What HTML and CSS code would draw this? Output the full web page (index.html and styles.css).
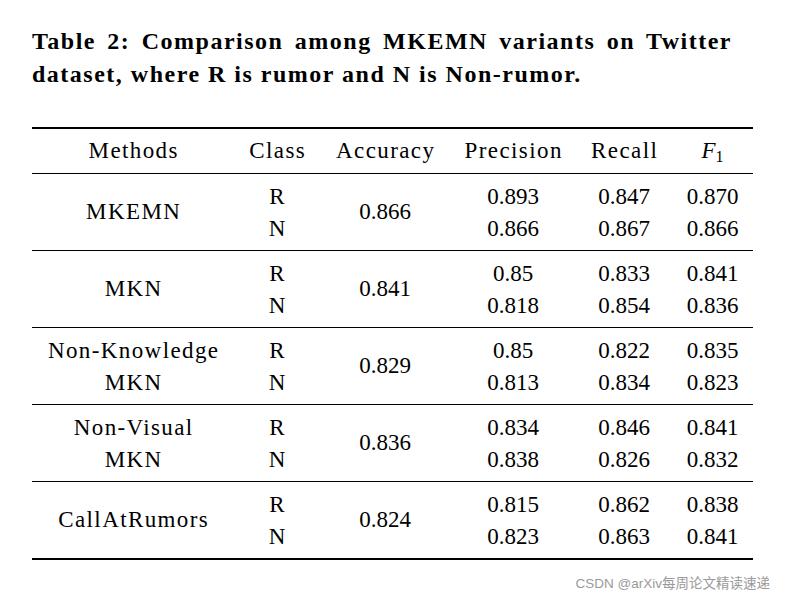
FILE: index.html
```html
<!DOCTYPE html>
<html>
<head>
<meta charset="utf-8">
<link rel="stylesheet" href="styles.css">
</head>
<body>
<div class="page">
  <div class="caption">Table 2: Comparison among MKEMN variants on Twitter dataset, where R is rumor and N is Non-rumor.</div>
  <table class="results">
    <colgroup>
      <col class="c-method"><col class="c-class"><col class="c-acc"><col class="c-prec"><col class="c-rec"><col class="c-f1">
    </colgroup>
    <thead>
      <tr><th class="word">Methods</th><th class="word">Class</th><th class="word">Accuracy</th><th class="word">Precision</th><th class="word">Recall</th><th><i>F</i><sub>1</sub></th></tr>
    </thead>
    <tbody>
      <tr class="r1"><td rowspan="2" class="word">MKEMN</td><td>R</td><td rowspan="2">0.866</td><td>0.893</td><td>0.847</td><td>0.870</td></tr>
      <tr class="r2"><td>N</td><td>0.866</td><td>0.867</td><td>0.866</td></tr>
    </tbody>
    <tbody>
      <tr class="r1"><td rowspan="2" class="word">MKN</td><td>R</td><td rowspan="2">0.841</td><td>0.85</td><td>0.833</td><td>0.841</td></tr>
      <tr class="r2"><td>N</td><td>0.818</td><td>0.854</td><td>0.836</td></tr>
    </tbody>
    <tbody>
      <tr class="r1"><td class="word">Non-Knowledge</td><td>R</td><td rowspan="2">0.829</td><td>0.85</td><td>0.822</td><td>0.835</td></tr>
      <tr class="r2"><td class="word">MKN</td><td>N</td><td>0.813</td><td>0.834</td><td>0.823</td></tr>
    </tbody>
    <tbody>
      <tr class="r1"><td class="word">Non-Visual</td><td>R</td><td rowspan="2">0.836</td><td>0.834</td><td>0.846</td><td>0.841</td></tr>
      <tr class="r2"><td class="word">MKN</td><td>N</td><td>0.838</td><td>0.826</td><td>0.832</td></tr>
    </tbody>
    <tbody>
      <tr class="r1"><td rowspan="2" class="word">CallAtRumors</td><td>R</td><td rowspan="2">0.824</td><td>0.815</td><td>0.862</td><td>0.838</td></tr>
      <tr class="r2"><td>N</td><td>0.823</td><td>0.863</td><td>0.841</td></tr>
    </tbody>
  </table>
  <div class="watermark">CSDN @arXiv每周论文精读速递</div>
</div>
</body>
</html>
```

FILE: styles.css
```css
html, body {
  margin: 0;
  padding: 0;
  background: #ffffff;
}

.page {
  width: 786px;
  height: 598px;
  padding-top: 25px;
  box-sizing: border-box;
  font-family: "Liberation Serif", "Times New Roman", serif;
  color: #000;
}

.caption {
  margin-left: 32px;
  width: 700px;
  font-size: 24px;
  font-weight: bold;
  line-height: 33px;
  letter-spacing: 1.5px;
  text-align: justify;
  text-align-last: left;
}

.results {
  margin: 36px 0 0 32px;
  width: 721px;
  border-collapse: collapse;
  table-layout: fixed;
  font-size: 23px;
  border-top: 2px solid #000;
  border-bottom: 2px solid #000;
}

.c-method { width: 202px; }
.c-class { width: 86px; }
.c-acc { width: 130px; }
.c-prec { width: 126px; }
.c-rec { width: 96px; }
.c-f1 { width: 81px; }

.results th,
.results td {
  padding: 0;
  text-align: center;
  font-weight: normal;
  line-height: 32px;
  vertical-align: middle;
  white-space: nowrap;
}

.results .word {
  letter-spacing: 1.4px;
  text-indent: 1.4px;
}

.results thead th {
  height: 43px;
  padding-bottom: 1px;
}

.results thead th sub {
  font-size: 16px;
  line-height: 0;
  vertical-align: -4px;
}

.results tbody {
  border-top: 1px solid #000;
}

.results tr.r1 td {
  height: 32px;
  padding-top: 7px;
}

.results tr.r2 td {
  height: 32px;
  padding-bottom: 5px;
}

.results td[rowspan] {
  padding-top: 0;
  padding-bottom: 0;
}

.results tr.r1 td[rowspan] {
  padding-top: 0;
}

.watermark {
  margin-top: 12px;
  padding-right: 16px;
  text-align: right;
  font-family: "Liberation Sans", "Noto Sans CJK SC", sans-serif;
  font-size: 13.5px;
  color: #9a9a9a;
}
```
